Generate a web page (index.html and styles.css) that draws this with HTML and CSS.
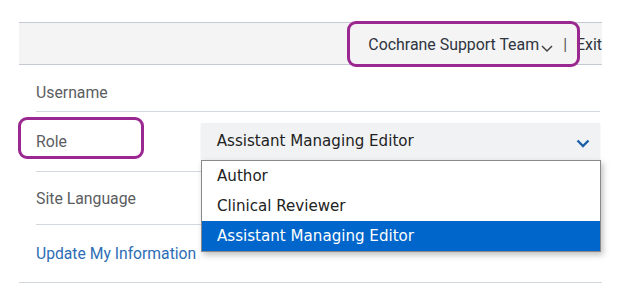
FILE: index.html
```html
<!DOCTYPE html>
<html lang="en">
<head>
    <meta charset="UTF-8">
    <meta name="viewport" content="width=device-width, initial-scale=1.0">
    <title>My Information</title>
    <link rel="stylesheet" href="styles.css">
</head>
<body>
    <div class="page">
        <div class="topbar">
            <div class="user-menu">
                <span class="user-name">Cochrane Support Team</span>
                <svg class="caret" width="14" height="10" viewBox="0 0 14 10"><path d="M2 3 L7 8 L12 3" fill="none" stroke="#444" stroke-width="1.5"/></svg>
                <span class="sep">|</span>
                <span class="exit">Exit</span>
            </div>
            <div class="mark mark-user"></div>
        </div>

        <div class="form">
            <div class="row row-username">
                <div class="label">Username</div>
            </div>
            <div class="row row-role">
                <div class="label">Role</div>
                <div class="select">
                    <span>Assistant Managing Editor</span>
                    <svg class="select-arrow" width="14" height="9" viewBox="0 0 14 9"><path d="M1.5 1.5 L7 7 L12.5 1.5" fill="none" stroke="#1c5fa8" stroke-width="2.4"/></svg>
                </div>
                <ul class="options">
                    <li>Author</li>
                    <li>Clinical Reviewer</li>
                    <li class="active">Assistant Managing Editor</li>
                </ul>
                <div class="mark mark-role"></div>
            </div>
            <div class="row row-lang">
                <div class="label">Site Language</div>
            </div>
            <div class="row row-update">
                <a class="link" href="#">Update My Information</a>
            </div>
        </div>
        <div class="bottom-line"></div>
    </div>
</body>
</html>
```

FILE: styles.css
```css
body {
    margin: 0;
    background-color: white;
    font-family: Roboto, "Liberation Sans", sans-serif;
}

.page {
    margin-left: 19px;
    width: 583px;
    padding-top: 22px;
}

.topbar {
    position: relative;
    height: 41px;
    background-color: #f4f4f4;
    border-top: 1px solid #c6cad2;
    border-bottom: 1px solid #c6cad2;
    display: flex;
    justify-content: flex-end;
    align-items: center;
}

.user-menu {
    display: flex;
    align-items: center;
    font-size: 15.9px;
    color: #2e3440;
    white-space: nowrap;
    margin-right: 0;
    padding-top: 2px;
}

.caret {
    margin-left: 1px;
    margin-top: 6px;
}

.sep {
    margin: 0 9px 0 9px;
    color: #555;
}

.mark {
    position: absolute;
    border: 3px solid #9b2890;
    border-radius: 9px;
}

.mark-user {
    left: 328px;
    top: -2px;
    width: 227px;
    height: 40px;
}

.form {
    margin-left: 17px;
    width: 564px;
}

.row {
    position: relative;
    display: flex;
    align-items: center;
    border-bottom: 1px solid #d3d7de;
}

.label {
    width: 165px;
    font-size: 15.8px;
    color: #5b5d61;
}

.row-username {
    height: 38px;
    padding-top: 8px;
}

.row-role {
    height: 58px;
    padding-bottom: 1px;
}

.row-lang {
    height: 52px;
}

.row-update {
    height: 57px;
    border-bottom: none;
}

.select {
    width: 384px;
    height: 36px;
    background-color: #f1f2f4;
    display: flex;
    align-items: center;
    justify-content: space-between;
    padding-left: 16px;
    font-family: "DejaVu Sans", Verdana, sans-serif;
    font-size: 15.1px;
    color: #222;
    box-shadow: 0 1px 2px rgba(0, 0, 0, 0.08);
}

.select-arrow {
    margin-right: 10px;
    margin-top: 4px;
}

.options {
    position: absolute;
    left: 165px;
    top: 48px;
    width: 398px;
    margin: 0;
    padding: 0;
    list-style-type: none;
    background-color: white;
    border: 1px solid #8a8a8a;
    box-shadow: 2px 3px 6px rgba(0, 0, 0, 0.25);
    font-family: "DejaVu Sans", Verdana, sans-serif;
    font-size: 15.1px;
    color: #222;
    z-index: 2;
}

.options li {
    height: 30px;
    line-height: 30px;
    padding-left: 15px;
}

.options li.active {
    background-color: #0066cc;
    color: white;
}

.mark-role {
    left: -18px;
    top: 5px;
    width: 120px;
    height: 36px;
}

.link {
    font-size: 15.7px;
    color: #2d6db5;
    text-decoration: none;
}

.bottom-line {
    border-top: 1px solid #d3d7de;
}
```
